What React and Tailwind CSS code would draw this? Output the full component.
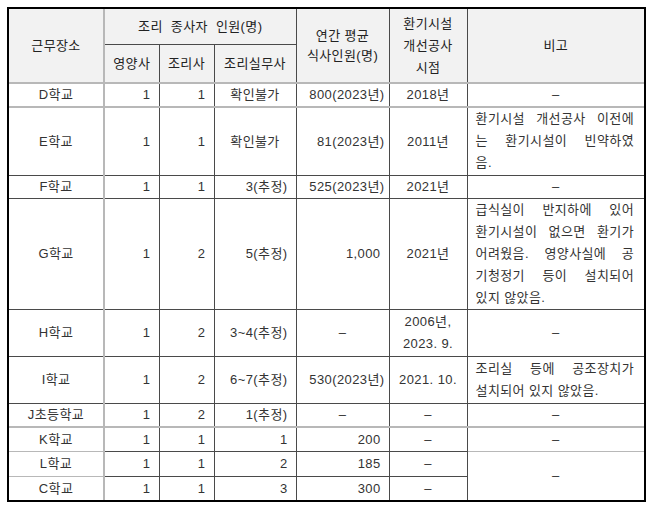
import React from 'react'

const line = 'border border-[#4a4a4a]'
const grayB = 'border-b-2 border-b-[#b8b8b8]'
const grayR = 'border-r-2 border-r-[#b8b8b8]'

function Cell({ className = '', children, ...rest }) {
  return (
    <td className={`${line} p-0 align-middle ${className}`} {...rest}>
      {children}
    </td>
  )
}

// justified note lines, last line left aligned
function Note({ lines }) {
  return (
    <div className="pl-[8px] pr-[10px] leading-[22px]">
      {lines.map((l, i) => (
        <span
          key={i}
          className={
            i < lines.length - 1
              ? 'block text-justify [text-align-last:justify]'
              : 'block text-left'
          }
        >
          {l}
        </span>
      ))}
    </div>
  )
}

const num = 'text-right pr-[8px]'
const mid = 'text-center'
const dash = '–'

export default function App() {
  return (
    <div className="bg-white min-h-[508px] pt-[7px] pl-[7px]">
      <div className="w-[639px] border-2 border-black font-['Liberation_Sans','Noto_Sans_CJK_KR',sans-serif] text-[13px] tracking-[0.4px] text-[#333]">
        <table className="w-full table-fixed border-collapse border-hidden">
          <colgroup>
            <col className="w-[95px]" />
            <col className="w-[55px]" />
            <col className="w-[55px]" />
            <col className="w-[82px]" />
            <col className="w-[93px]" />
            <col className="w-[78px]" />
            <col className="w-[177px]" />
          </colgroup>
          <thead className="bg-[#f2f2f2] text-[#222]">
            <tr className="h-[35px]">
              <Cell rowSpan={2} className={`${mid} ${grayB} ${grayR}`}>근무장소</Cell>
              <Cell colSpan={3} className={`${mid} [word-spacing:4px]`}>조리 종사자 인원(명)</Cell>
              <Cell rowSpan={2} className={`${mid} ${grayB} leading-[20px]`}>
                연간 평균
                <br />
                식사인원(명)
              </Cell>
              <Cell rowSpan={2} className={`${mid} ${grayB} leading-[22px]`}>
                환기시설
                <br />
                개선공사
                <br />
                시점
              </Cell>
              <Cell rowSpan={2} className={`${mid} ${grayB}`}>비고</Cell>
            </tr>
            <tr className="h-[39px]">
              <Cell className={`${mid} ${grayB}`}>영양사</Cell>
              <Cell className={`${mid} ${grayB}`}>조리사</Cell>
              <Cell className={`${mid} ${grayB}`}>조리실무사</Cell>
            </tr>
          </thead>
          <tbody>
            <tr className="h-[24px]">
              <Cell className={`${mid} ${grayB} ${grayR}`}>D학교</Cell>
              <Cell className={`${num} ${grayB}`}>1</Cell>
              <Cell className={`${num} ${grayB}`}>1</Cell>
              <Cell className={`${mid} ${grayB}`}>확인불가</Cell>
              <Cell className={`text-right pr-[4px] ${grayB}`}>800(2023년)</Cell>
              <Cell className={`${mid} ${grayB}`}>2018년</Cell>
              <Cell className={`${mid} ${grayB}`}>{dash}</Cell>
            </tr>
            <tr className="h-[68px]">
              <Cell className={`${mid} ${grayR}`}>E학교</Cell>
              <Cell className={num}>1</Cell>
              <Cell className={num}>1</Cell>
              <Cell className={mid}>확인불가</Cell>
              <Cell className="text-right pr-[4px]">81(2023년)</Cell>
              <Cell className={mid}>2011년</Cell>
              <Cell>
                <Note lines={['환기시설 개선공사 이전에', '는 환기시설이 빈약하였', '음.']} />
              </Cell>
            </tr>
            <tr className="h-[23px]">
              <Cell className={`${mid} ${grayR}`}>F학교</Cell>
              <Cell className={num}>1</Cell>
              <Cell className={num}>1</Cell>
              <Cell className={num}>3(추정)</Cell>
              <Cell className="text-right pr-[4px]">525(2023년)</Cell>
              <Cell className={mid}>2021년</Cell>
              <Cell className={mid}>{dash}</Cell>
            </tr>
            <tr className="h-[110px]">
              <Cell className={`${mid} ${grayR}`}>G학교</Cell>
              <Cell className={num}>1</Cell>
              <Cell className={num}>2</Cell>
              <Cell className={num}>5(추정)</Cell>
              <Cell className={num}>1,000</Cell>
              <Cell className={mid}>2021년</Cell>
              <Cell>
                <Note
                  lines={[
                    '급식실이 반지하에 있어',
                    '환기시설이 없으면 환기가',
                    '어려웠음. 영양사실에 공',
                    '기청정기 등이 설치되어',
                    '있지 않았음.',
                  ]}
                />
              </Cell>
            </tr>
            <tr className="h-[47px]">
              <Cell className={`${mid} ${grayR}`}>H학교</Cell>
              <Cell className={num}>1</Cell>
              <Cell className={num}>2</Cell>
              <Cell className={num}>3~4(추정)</Cell>
              <Cell className={mid}>{dash}</Cell>
              <Cell className={`${mid} leading-[22px]`}>
                2006년,
                <br />
                2023. 9.
              </Cell>
              <Cell className={mid}>{dash}</Cell>
            </tr>
            <tr className="h-[47px]">
              <Cell className={`${mid} ${grayR}`}>I학교</Cell>
              <Cell className={num}>1</Cell>
              <Cell className={num}>2</Cell>
              <Cell className={num}>6~7(추정)</Cell>
              <Cell className="text-right pr-[4px]">530(2023년)</Cell>
              <Cell className={mid}>2021. 10.</Cell>
              <Cell>
                <Note lines={['조리실 등에 공조장치가', '설치되어 있지 않았음.']} />
              </Cell>
            </tr>
            <tr className="h-[24px]">
              <Cell className={`${mid} ${grayB} ${grayR}`}>J초등학교</Cell>
              <Cell className={`${num} ${grayB}`}>1</Cell>
              <Cell className={`${num} ${grayB}`}>2</Cell>
              <Cell className={`${num} ${grayB}`}>1(추정)</Cell>
              <Cell className={`${mid} ${grayB}`}>{dash}</Cell>
              <Cell className={`${mid} ${grayB}`}>{dash}</Cell>
              <Cell className={`${mid} ${grayB}`}>{dash}</Cell>
            </tr>
            <tr className="h-[24px]">
              <Cell className={`${mid} ${grayR} border-b-[#b8b8b8]`}>K학교</Cell>
              <Cell className={num}>1</Cell>
              <Cell className={num}>1</Cell>
              <Cell className={num}>1</Cell>
              <Cell className={num}>200</Cell>
              <Cell className={mid}>{dash}</Cell>
              <Cell className={`${mid} border-b-[#b8b8b8]`}>{dash}</Cell>
            </tr>
            <tr className="h-[25px]">
              <Cell className={`${mid} ${grayR} border-b-[#b8b8b8]`}>L학교</Cell>
              <Cell className={num}>1</Cell>
              <Cell className={num}>1</Cell>
              <Cell className={num}>2</Cell>
              <Cell className={num}>185</Cell>
              <Cell className={mid}>{dash}</Cell>
              <Cell rowSpan={2} className={mid}>{dash}</Cell>
            </tr>
            <tr className="h-[24px]">
              <Cell className={`${mid} ${grayR}`}>C학교</Cell>
              <Cell className={num}>1</Cell>
              <Cell className={num}>1</Cell>
              <Cell className={num}>3</Cell>
              <Cell className={num}>300</Cell>
              <Cell className={mid}>{dash}</Cell>
            </tr>
          </tbody>
        </table>
      </div>
    </div>
  )
}
